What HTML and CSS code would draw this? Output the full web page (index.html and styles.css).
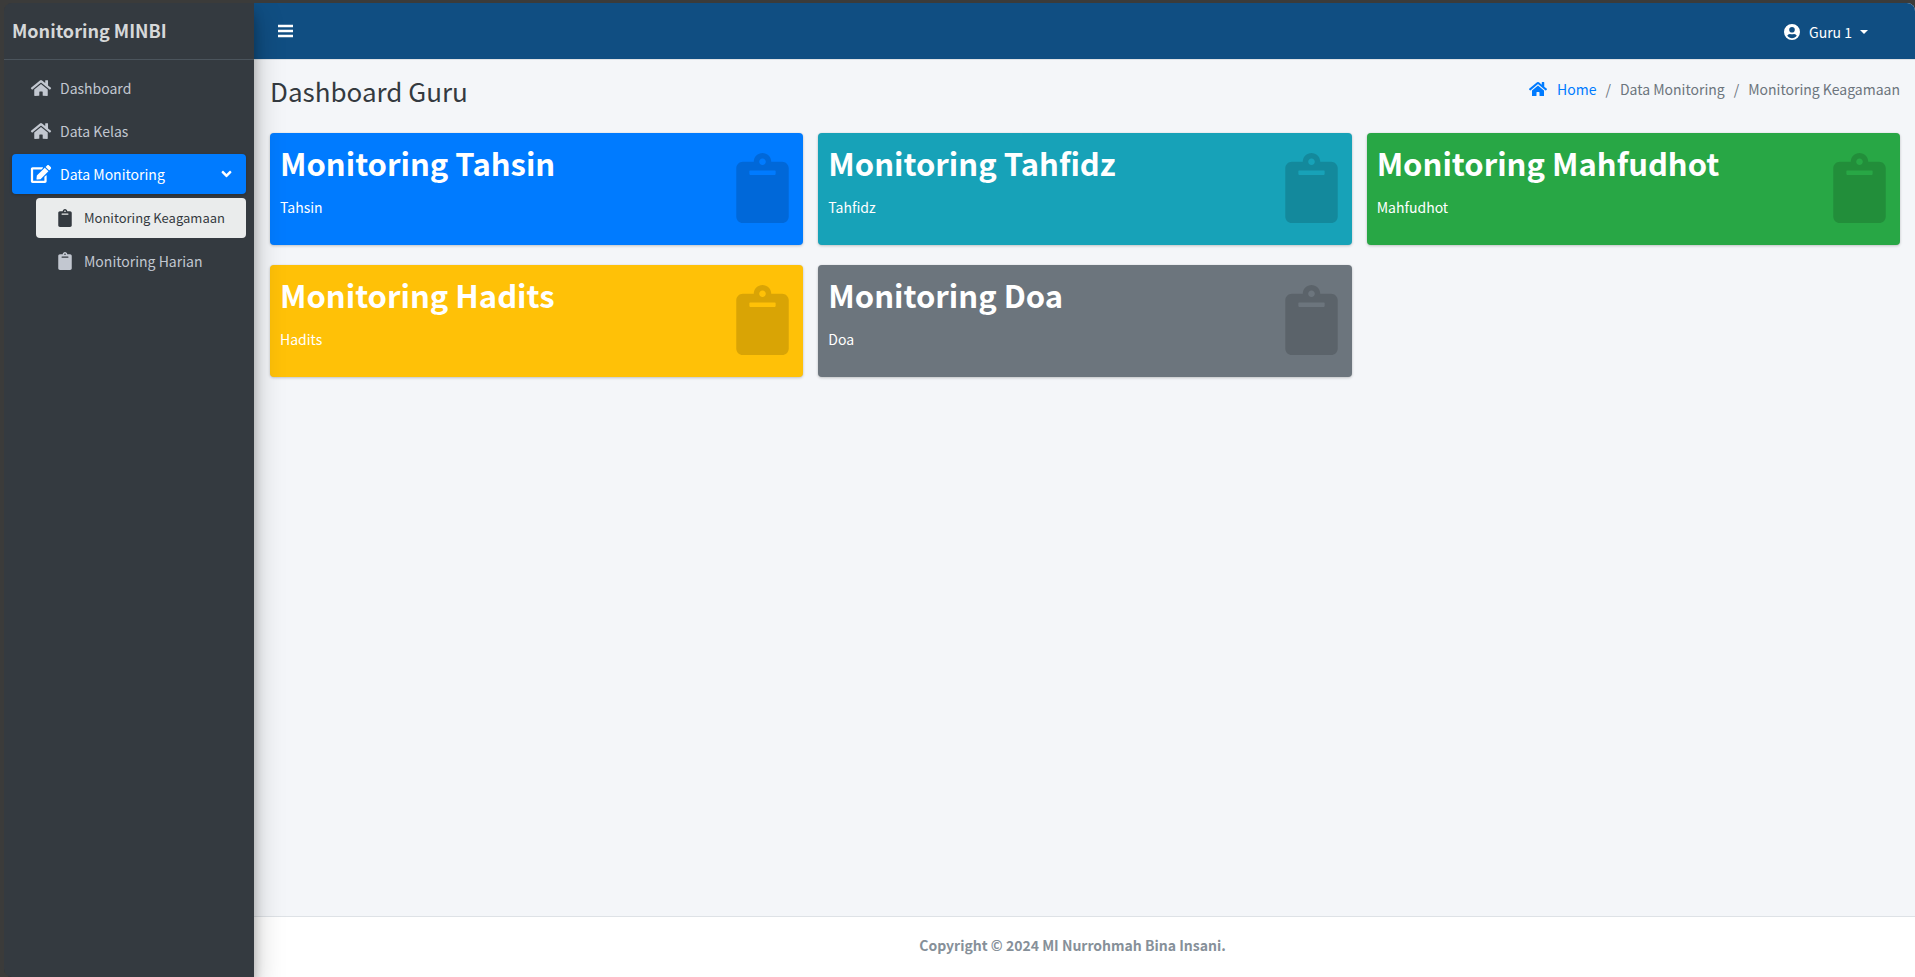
FILE: index.html
```html
<!DOCTYPE html>
<html lang="id">
<head>
<meta charset="utf-8">
<title>Monitoring MINBI</title>
<link rel="stylesheet" href="styles.css">
</head>
<body>
<svg class="sprite" aria-hidden="true">
  <symbol id="home" viewBox="0 0 576 512"><path d="M280.37 148.26L96 300.11V464a16 16 0 0 0 16 16l112.06-.29a16 16 0 0 0 15.92-16V368a16 16 0 0 1 16-16h64a16 16 0 0 1 16 16v95.64a16 16 0 0 0 16 16.05L464 480a16 16 0 0 0 16-16V300L295.67 148.26a12.19 12.19 0 0 0-15.3 0zM571.6 251.47L488 182.56V44.05a12 12 0 0 0-12-12h-56a12 12 0 0 0-12 12v72.61L318.47 43a48 48 0 0 0-61 0L4.34 251.47a12 12 0 0 0-1.6 16.9l25.5 31A12 12 0 0 0 45.15 301l235.22-193.74a12.19 12.19 0 0 1 15.3 0L530.9 301a12 12 0 0 0 16.9-1.6l25.5-31a12 12 0 0 0-1.7-16.93z"/></symbol>
  <symbol id="edit" viewBox="0 0 576 512"><path d="M402.6 83.2l90.2 90.2c3.8 3.8 3.8 10 0 13.8L274.4 405.6l-92.8 10.3c-12.4 1.4-22.9-9.1-21.5-21.5l10.3-92.8L388.8 83.2c3.8-3.8 10-3.8 13.8 0zm162-22.9l-48.8-48.8c-15.2-15.2-39.9-15.2-55.2 0l-35.4 35.4c-3.8 3.8-3.8 10 0 13.8l90.2 90.2c3.8 3.8 10 3.8 13.8 0l35.4-35.4c15.2-15.3 15.2-40 0-55.2zM384 346.2V448H64V128h229.8c3.2 0 6.2-1.3 8.5-3.5l40-40c7.6-7.6 2.2-20.5-8.5-20.5H48C21.5 64 0 85.5 0 112v352c0 26.5 21.5 48 48 48h352c26.5 0 48-21.5 48-48V306.2c0-10.7-12.9-16-20.5-8.5l-40 40c-2.2 2.3-3.5 5.3-3.5 8.5z"/></symbol>
  <symbol id="clipboard" viewBox="0 0 384 512"><path d="M384 112v352c0 26.51-21.49 48-48 48H48c-26.51 0-48-21.49-48-48V112c0-26.51 21.49-48 48-48h80c0-35.29 28.71-64 64-64s64 28.71 64 64h80c26.51 0 48 21.49 48 48zM192 40c-13.255 0-24 10.745-24 24s10.745 24 24 24 24-10.745 24-24-10.745-24-24-24m96 114v-20a6 6 0 0 0-6-6H102a6 6 0 0 0-6 6v20a6 6 0 0 0 6 6h180a6 6 0 0 0 6-6z"/></symbol>
  <symbol id="angle" viewBox="0 0 320 512"><path d="M143 352.3L7 216.3c-9.4-9.4-9.4-24.6 0-33.9l22.6-22.6c9.4-9.4 24.6-9.4 33.9 0l96.4 96.4 96.4-96.4c9.4-9.4 24.6-9.4 33.9 0l22.6 22.6c9.4 9.4 9.4 24.6 0 33.9l-136 136c-9.2 9.4-24.4 9.4-33.8 0z"/></symbol>
  <symbol id="bars" viewBox="0 0 15 14"><path d="M0 .8h15v2.500H0zM0 5.800h15v2.500H0zM0 10.800h15v2.500H0z"/></symbol>
  <symbol id="user" viewBox="0 0 16 16"><path fill-rule="evenodd" d="M8 0a8 8 0 1 1 0 16A8 8 0 0 1 8 0zm0 3a2.8 2.8 0 1 0 0 5.600a2.800 2.800 0 0 0 0-5.600zM3.300 11.800C4.400 13.300 6.100 14.200 8 14.200s3.600-.9 4.700-2.400C12.200 10.600 11.300 9.900 10.200 9.900c-.7 0-1.200.4-2.200.4s-1.500-.4-2.200-.4c-1.100 0-2 .7-2.500 1.900z"/></symbol>
</svg>
<div class="app">
  <aside class="sidebar">
    <a class="brand" href="#">Monitoring MINBI</a>
    <nav class="menu">
      <a class="item" href="#"><svg class="icon-lg"><use href="#home"/></svg>Dashboard</a>
      <a class="item" href="#"><svg class="icon-lg"><use href="#home"/></svg>Data Kelas</a>
      <a class="item active" href="#"><svg class="icon-lg"><use href="#edit"/></svg>Data Monitoring<svg class="arrow"><use href="#angle"/></svg></a>
      <div class="submenu">
        <a class="item current" href="#"><svg class="icon-lg"><use href="#clipboard"/></svg>Monitoring Keagamaan</a>
        <a class="item" href="#"><svg class="icon-lg"><use href="#clipboard"/></svg>Monitoring Harian</a>
      </div>
    </nav>
  </aside>
  <div class="page">
    <header class="topbar">
      <button class="toggle" type="button" aria-label="Menu"><svg><use href="#bars"/></svg></button>
      <button class="account" type="button"><svg><use href="#user"/></svg>Guru 1<span class="caret"></span></button>
    </header>
    <main class="content">
      <div class="heading">
        <h1>Dashboard Guru</h1>
        <nav class="crumbs"><a href="#"><svg><use href="#home"/></svg>Home</a><span>/</span><span>Data Monitoring</span><span>/</span><span>Monitoring Keagamaan</span></nav>
      </div>
      <div class="cards">
        <section class="card blue"><div><h2>Monitoring Tahsin</h2><p>Tahsin</p></div><svg><use href="#clipboard"/></svg></section>
        <section class="card teal"><div><h2>Monitoring Tahfidz</h2><p>Tahfidz</p></div><svg><use href="#clipboard"/></svg></section>
        <section class="card green"><div><h2>Monitoring Mahfudhot</h2><p>Mahfudhot</p></div><svg><use href="#clipboard"/></svg></section>
        <section class="card yellow"><div><h2>Monitoring Hadits</h2><p>Hadits</p></div><svg><use href="#clipboard"/></svg></section>
        <section class="card gray"><div><h2>Monitoring Doa</h2><p>Doa</p></div><svg><use href="#clipboard"/></svg></section>
      </div>
    </main>
    <footer class="footer">Copyright © 2024 MI Nurrohmah Bina Insani.</footer>
  </div>
</div>
</body>
</html>
```
FILE: styles.css
```css
* { box-sizing: border-box; }
body {
  margin: 0;
  padding: 3px 0 0 4px;
  background: #3b3b3a;
  color: #343a40;
  font-family: "Source Sans Pro", "Noto Sans CJK SC", "Noto Sans", sans-serif;
  font-size: 14px;
  line-height: 24px;
}
a { color: inherit; text-decoration: none; }
button { border: 0; padding: 0; background: none; color: inherit; font: inherit; }
svg { fill: currentColor; flex: none; }
.sprite { display: none; }
.app {
  display: flex;
  min-height: calc(100vh - 3px);
  border-radius: 8px 8px 0 8px;
  overflow: hidden;
}
.sidebar {
  z-index: 1;
  flex: none;
  width: 250px;
  background: #343a40;
  color: #c2c7d0;
  box-shadow: 0 14px 28px rgba(0, 0, 0, .25), 0 10px 10px rgba(0, 0, 0, .22);
}
.brand {
  display: block;
  padding: 15px 8px 17px;
  border-bottom: 1px solid #4b545c;
  color: #d6d8d9;
  font-size: 18px;
  font-weight: 700;
}
.menu { padding: 8px; }
.item {
  display: flex;
  align-items: center;
  height: 40px;
  margin-bottom: 3px;
  padding: 0 14px 0 16px;
  border-radius: 4px;
  white-space: nowrap;
}
.icon-lg { width: 26px; height: 18px; margin-right: 6px; }
.active { background: #007bff; color: #fff; margin-bottom: 4px; box-shadow: 0 1px 3px rgba(0, 0, 0, .2); }
.arrow { width: 11px; height: 16px; margin-left: auto; }
.submenu { padding-left: 24px; }
.current { background: #eaecec; color: #343a40; font-size: 13px; }
.page { flex: 1; display: flex; flex-direction: column; min-width: 0; background: #f4f6f9; }
.topbar {
  display: flex;
  align-items: center;
  justify-content: space-between;
  height: 57px;
  padding: 0 47px 0 24px;
  border-bottom: 1px solid #dee2e6;
  background: #104e82;
  color: #fff;
}
.topbar svg { display: block; }
.toggle svg { width: 15px; height: 14px; }
.account { display: flex; align-items: center; padding-top: 2px; }
.account svg { width: 16px; height: 16px; margin-right: 9px; }
.caret { margin-left: 8px; border: 4px solid transparent; border-top-color: #fff; border-bottom: 0; }
.content { flex: 1; padding: 14px 15px 15px 16px; }
.heading { display: flex; justify-content: space-between; height: 59px; }
h1 { margin: 0; font-size: 26px; font-weight: 400; line-height: 34px; }
.crumbs { display: flex; gap: 9px; color: #6c757d; height: 30px; align-items: center; }
.crumbs a { display: flex; align-items: center; gap: 10px; color: #007bff; }
.crumbs svg { width: 18px; height: 16px; }
.cards { display: grid; grid-template-columns: repeat(3, 1fr); gap: 20px 15px; }
.card {
  display: flex;
  justify-content: space-between;
  height: 112px;
  padding: 10px 14px 10px 10px;
  border-radius: 4px;
  color: #fff;
  box-shadow: 0 0 1px rgba(0, 0, 0, .13), 0 1px 3px rgba(0, 0, 0, .2);
}
.card h2 { margin: 0 0 12px; font-size: 31px; font-weight: 700; line-height: 40px; }
.card p { margin: 0; }
.card svg { width: 53px; height: 70px; margin-top: 10px; color: rgba(0, 0, 0, .15); }
.blue { background: #007bff; }
.teal { background: #17a2b8; }
.green { background: #28a745; }
.yellow { background: #ffc107; }
.gray { background: #6c757d; }
.footer {
  padding: 16px 40px 20px 16px;
  border-top: 1px solid #dee2e6;
  background: #fff;
  color: #869099;
  font-weight: 700;
  text-align: center;
}
```
